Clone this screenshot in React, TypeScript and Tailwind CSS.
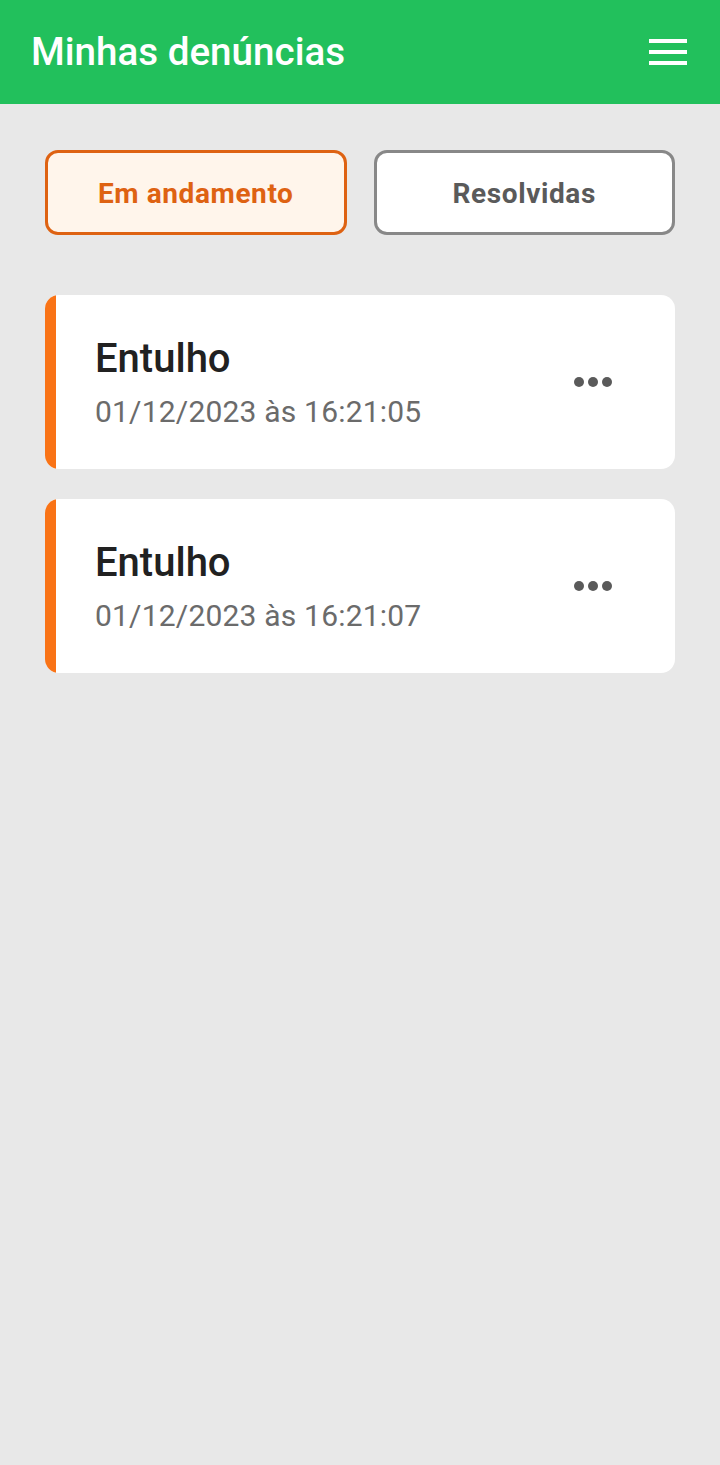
import React from "react";

function Card({ date }: { date: string }) {
  return (
    <div className="flex h-[174px] items-center overflow-hidden rounded-[14px] bg-white">
      <div className="h-full w-[11px] shrink-0 bg-[#f97316]" />
      <div className="flex flex-1 flex-col pl-[39px]">
        <div className="text-[40px] font-medium leading-[46px] text-[#212121]">Entulho</div>
        <div className="mt-[13px] text-[30px] leading-[34px] tracking-[0.2px] text-[#6b6b6b]">{date}</div>
      </div>
      <div className="mr-[63px] flex gap-[4px] self-center">
        <span className="h-[10px] w-[10px] rounded-full bg-[#5a5a5a]" />
        <span className="h-[10px] w-[10px] rounded-full bg-[#5a5a5a]" />
        <span className="h-[10px] w-[10px] rounded-full bg-[#5a5a5a]" />
      </div>
    </div>
  );
}

export default function App() {
  return (
    <div className="min-h-[1465px] bg-[#e8e8e8]" style={{ fontFamily: "Roboto, 'Noto Sans', sans-serif" }}>
      <header className="flex h-[104px] items-center justify-between bg-[#22c05c] pl-[31px] pr-[33px]">
        <h1 className="text-[38.6px] font-medium leading-none text-white">Minhas denúncias</h1>
        <div className="flex flex-col gap-[7px]">
          <span className="h-[4px] w-[38px] bg-white" />
          <span className="h-[4px] w-[38px] bg-white" />
          <span className="h-[4px] w-[38px] bg-white" />
        </div>
      </header>
      <main className="px-[45px] pt-[46px]">
        <div className="grid grid-cols-2 gap-[27px]">
          <button className="flex h-[85px] items-center justify-center rounded-[13px] border-[3px] border-[#de6212] bg-[#fff5eb] pt-[3px] text-[28px] font-bold tracking-[0.6px] text-[#de6212]">
            Em andamento
          </button>
          <button className="flex h-[85px] items-center justify-center rounded-[13px] border-[3px] border-[#888888] bg-white pt-[3px] text-[28px] font-bold tracking-[0.6px] text-[#5a5a5a]">
            Resolvidas
          </button>
        </div>
        <div className="mt-[60px] flex flex-col gap-[30px]">
          <Card date="01/12/2023 às 16:21:05" />
          <Card date="01/12/2023 às 16:21:07" />
        </div>
      </main>
    </div>
  );
}
